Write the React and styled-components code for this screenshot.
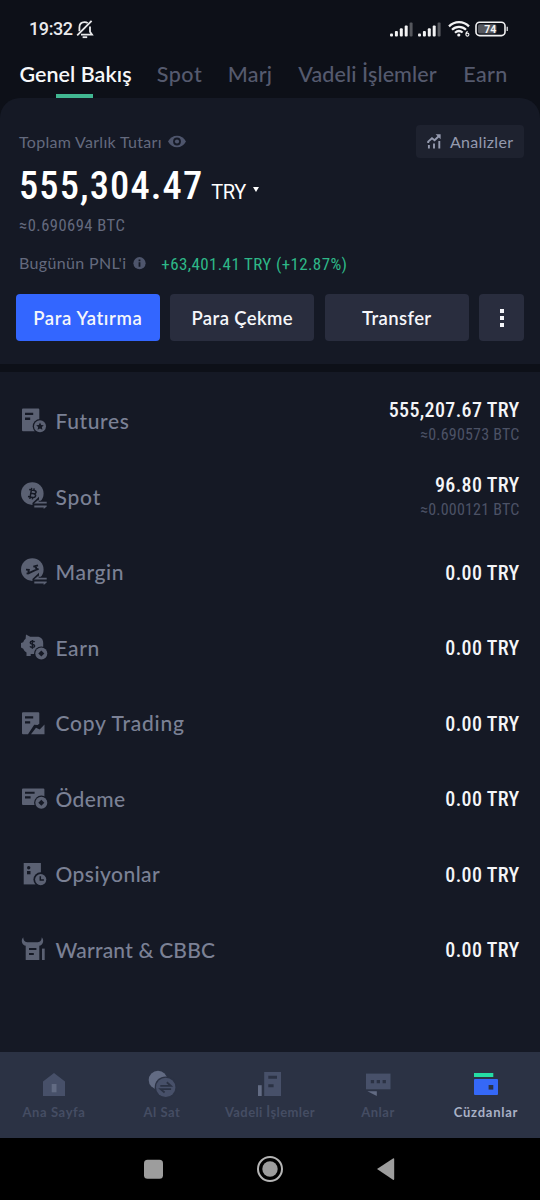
import React from "react";
import styled, { createGlobalStyle } from "styled-components";

const GlobalStyle = createGlobalStyle`
  * {
    box-sizing: border-box;
  }

  body {
    margin: 0;
    background: #0d1018;
  }
`;

const sans = `"Lato", "Open Sans", sans-serif`;
const digits = `"Roboto", "Liberation Sans", sans-serif`;

const Screen = styled.div`
  display: flex;
  flex-direction: column;
  width: 540px;
  height: 1200px;
  overflow: hidden;
  background: #0d1018;
  font-family: ${sans};
  white-space: nowrap;
`;

const StatusBar = styled.div`
  display: flex;
  align-items: center;
  height: 58px;
  padding: 0 31px 0 29px;
`;

const Clock = styled.div`
  width: 47px;
  font-family: ${digits};
  font-weight: 500;
  font-size: 18px;
  line-height: 20px;
  letter-spacing: -0.4px;
  color: #e9eaec;
`;

const StatusIcons = styled.div`
  display: flex;
  align-items: center;
  margin-left: auto;
`;

const Tabs = styled.div`
  display: flex;
  height: 40px;
  padding-left: 20px;
  gap: 25px;
`;

const Tab = styled.div`
  display: flex;
  flex-direction: column;
  align-items: center;
  justify-content: space-between;
  width: ${(props) => props.$width}px;
  padding-top: 3px;
  font-weight: ${(props) => (props.$active ? 600 : 500)};
  font-size: 21.5px;
  line-height: 26px;
  letter-spacing: ${(props) => props.$ls || 0}px;
  color: ${(props) => (props.$active ? "#f7f8fa" : "#555a6e")};
`;

const Underline = styled.div`
  width: 37px;
  height: 4px;
  margin-right: 2px;
  background: #41b792;
`;

const Summary = styled.div`
  display: flex;
  flex-direction: column;
  height: 266px;
  padding: 27px 16px 0;
  border-radius: 20px 20px 0 0;
  background: #151925;
`;

const SummaryTop = styled.div`
  display: flex;
  align-items: center;
  justify-content: space-between;
  height: 33px;
`;

const Caption = styled.div`
  display: flex;
  align-items: center;
  gap: ${(props) => props.$gap || 6}px;
  padding-left: 3px;
  font-size: 16px;
  line-height: 20px;
  letter-spacing: ${(props) => props.$ls || 0}px;
  color: #646a7e;
`;

const Analysis = styled.div`
  display: flex;
  align-items: center;
  width: 108px;
  height: 33px;
  padding-left: 11px;
  gap: 8px;
  border-radius: 4px;
  background: #1e222f;
  font-size: 16px;
  letter-spacing: 0.3px;
  color: #949aae;
`;

const Balance = styled.div`
  display: flex;
  align-items: baseline;
  height: 54px;
  padding-left: 3px;
  font-family: ${digits};
  font-weight: 500;
  font-stretch: 75%;
  font-size: 38.5px;
  line-height: 56px;
  letter-spacing: 1.1px;
  color: #ffffff;
`;

const Currency = styled.div`
  margin-left: 8px;
  font-weight: 400;
  font-stretch: 100%;
  font-size: 20px;
  letter-spacing: -0.4px;
`;

const Caret = styled.div`
  align-self: center;
  margin: 9px 0 0 7px;
  border: 3.5px solid transparent;
  border-top: 5px solid #ffffff;
  border-bottom: 0;
`;

const Approx = styled.div`
  height: 24px;
  padding-left: 3px;
  font-family: ${digits};
  font-stretch: 75%;
  font-size: 16.5px;
  line-height: 28px;
  letter-spacing: 0.5px;
  color: #646a7e;
`;

const PnlRow = styled.div`
  display: flex;
  align-items: center;
  height: 20px;
  margin-top: 17px;
`;

const Profit = styled.div`
  margin-left: 15px;
  font-family: ${digits};
  font-stretch: 75%;
  font-size: 17px;
  line-height: 20px;
  letter-spacing: 0.38px;
  padding-top: 2px;
  color: #2eb888;
`;

const Actions = styled.div`
  display: grid;
  grid-template-columns: repeat(3, 143.6px) 1fr;
  gap: 10.9px;
  margin-top: 21px;
`;

const ActionButton = styled.div`
  display: flex;
  align-items: center;
  justify-content: center;
  height: 47px;
  padding-top: 1px;
  border-radius: 4px;
  background: ${(props) => (props.$primary ? "#3366ff" : "#292d3e")};
  font-weight: 600;
  font-size: 18.5px;
  letter-spacing: ${(props) => props.$ls || 0}px;
  color: #f5f6fa;
`;

const Accounts = styled.div`
  flex: 1;
  margin-top: 8px;
  padding: 12px 20.5px 0 20px;
  background: #151925;
`;

const AccountRow = styled.div`
  display: flex;
  align-items: center;
  height: 75.5px;
`;

const AccountName = styled.div`
  margin-left: 7.5px;
  padding-bottom: 1px;
  font-weight: 500;
  font-size: 21px;
  line-height: 26px;
  letter-spacing: ${(props) => props.$ls || 0}px;
  color: #7b8195;
`;

const Amounts = styled.div`
  margin-left: auto;
  text-align: right;
  font-family: ${digits};
  font-stretch: 75%;
`;

const Amount = styled.div`
  font-weight: 500;
  font-size: 20px;
  line-height: 26px;
  letter-spacing: 0.35px;
  color: #f4f5f8;
`;

const SubAmount = styled.div`
  font-size: 16px;
  line-height: 24px;
  letter-spacing: 0.2px;
  color: #4c5265;
`;

const BottomNav = styled.div`
  display: grid;
  grid-template-columns: repeat(5, 1fr);
  height: 86px;
  background: #2b3244;
`;

const NavItem = styled.div`
  display: flex;
  flex-direction: column;
  align-items: center;
  padding-top: 18px;
  font-weight: 700;
  font-size: 13px;
  line-height: 18px;
  letter-spacing: ${(props) => props.$ls || 0}px;
  color: ${(props) => (props.$active ? "#a9b1c6" : "#454d63")};
`;

const NavLabel = styled.div`
  margin-top: 5px;
`;

const SystemBar = styled.div`
  display: flex;
  justify-content: center;
  height: 62px;
  background: #000000;
`;

const Icon = styled.svg`
  display: block;
  flex: none;
  overflow: visible;
`;

const BG = "#151925";
const FG = "#5b6173";

const BellOff = () => (
  <Icon width="18" height="20" viewBox="0 0 18 20" fill="none" stroke="#e9eaec" strokeWidth="1.8">
    <path d="M3.4 12.2V8.6c0-3.2 2-5.4 5.2-5.4 1.2 0 2.3.3 3.1.9M14 7.4v5.3l2 2.9H5" />
    <path d="M1.2 16.4L15.6 1.8" />
    <path d="M6.6 18.2h4.6" />
  </Icon>
);

const Signal = () => (
  <Icon width="23" height="15" viewBox="0 0 23 15" fill="#f2f2f3">
    <rect x="0" y="11.5" width="3" height="3" rx="1" />
    <rect x="4.9" y="9" width="3" height="5.5" rx="1" />
    <rect x="9.8" y="6.3" width="3" height="8.2" rx="1" />
    <rect x="14.7" y="3.4" width="3" height="11.1" rx="1" />
    <rect x="19.6" y="0.5" width="3" height="14" rx="1" fill="#55575d" />
  </Icon>
);

const Wifi = () => (
  <Icon width="22" height="16" viewBox="0 0 22 16" fill="none" stroke="#f2f2f3" strokeWidth="2.2">
    <path d="M1 5.4C6.6-.2 15.4-.2 21 5.4" />
    <path d="M4 8.7c4-3.9 10-3.9 14 0" />
    <path d="M7 11.8c2.4-2.2 5.2-2.3 7.6-.3" />
    <circle cx="10.8" cy="14" r="1.6" fill="#f2f2f3" stroke="none" />
    <path d="M19.6 10.3c-1.5.8-1.8 2-1.8 3M19.4 15.1a1.5 1.5 0 1 0 0-3 1.5 1.5 0 0 0 0 3z" strokeWidth="1.1" />
  </Icon>
);

const Battery = () => (
  <Icon width="34" height="16" viewBox="0 0 34 16">
    <rect x="1" y="1.2" width="29" height="13.4" rx="3.6" fill="none" stroke="#f2f2f3" strokeWidth="1.6" />
    <rect x="3" y="3.2" width="18.5" height="9.4" rx="1.8" fill="#55575d" />
    <path d="M31.6 5.7h1.2v4.4h-1.2z" fill="#f2f2f3" />
    <text
      x="15.3"
      y="11.8"
      textAnchor="middle"
      fontFamily="Roboto"
      fontWeight="700"
      fontSize="10.5"
      fill="#f2f2f3"
    >
      74
    </text>
  </Icon>
);

const Eye = () => (
  <Icon width="18" height="13" viewBox="0 0 18 13">
    <path d="M0 6.5C2 2.6 5.3.7 9 .7s7 1.9 9 5.8c-2 3.9-5.3 5.8-9 5.8S2 10.4 0 6.5z" fill="#4e556c" />
    <circle cx="9" cy="6.5" r="3.9" fill={BG} />
    <circle cx="9" cy="6.5" r="2.1" fill="#4e556c" />
  </Icon>
);

const Info = () => (
  <Icon width="13" height="13" viewBox="0 0 13 13">
    <circle cx="6.5" cy="6.2" r="6.1" fill="#4e556c" />
    <path d="M5.6 2.5h1.8v1.7H5.6zM5.6 5.2h1.8v4.5H5.6z" fill={BG} />
  </Icon>
);

const ChartIcon = () => (
  <Icon width="15" height="17" viewBox="0 0 15 17" fill="none" stroke="#949aae" strokeWidth="1.9">
    <path d="M1.2 10V8.600L5 5.200l2.600 2L12 3" />
    <path d="M8.600 1.200h5v5z" fill="#949aae" stroke="none" />
    <path d="M1.900 12v3.600M7 10.600v5M12.300 8v7.600" />
  </Icon>
);

const SwapArrows = () => (
  <>
    <path d="M12.400 20l6.600-6.200v4h8.800v8.800h-15z" fill={BG} />
    <path d="M14 20.600l4.700-4v2.100h8v1.900zM14.300 22.500h12.400v1.100l-3 2.500v-1.700h-9.400z" fill={FG} />
  </>
);

const CoinBadge = ({ cx, cy }) => (
  <>
    <circle cx={cx} cy={cy} r="7.2" fill={BG} />
    <circle cx={cx} cy={cy} r="6" fill={FG} />
    <path d={`M${cx} ${cy - 3}l3 3-3 3-3-3z`} fill={BG} />
  </>
);

const accountIcons = {
  futures: (
    <>
      <path d="M3 .6h15.3a1 1 0 0 1 1 1v21.7H3a1 1 0 0 1-1-1V1.600a1 1 0 0 1 1-1z" fill={FG} />
      <path d="M5 4.700h8.200v2.300H5zM5 9.600h5.200v2.300H5z" fill={BG} />
      <circle cx="20" cy="18.300" r="7.300" fill={BG} />
      <circle cx="20" cy="18.300" r="6" fill={FG} />
      <path
        d="M20 14.600l1.200 2.300 2.600.4-1.900 1.800.5 2.600-2.400-1.200-2.400 1.200.5-2.600-1.900-1.800 2.600-.4z"
        fill={BG}
      />
    </>
  ),
  spot: (
    <>
      <circle cx="12.300" cy="10.600" r="11.300" fill={FG} />
      <path
        d="M9.200 6.600l5.200.9c2.600.6 2 3.400-.5 3.200l-3.200-.5m3.200.5c2.700.8 2 4.100-1 3.700l-4.900-.9M11.400 6.900l-1.200 6.700M11.700 4.800l-.4 2.100M14.200 5.300l-.4 2.100M10.200 13.800l-.4 2.100M12.700 14.200l-.4 2.100"
        fill="none"
        stroke={BG}
        strokeWidth="1.500"
      />
      <SwapArrows />
    </>
  ),
  margin: (
    <>
      <circle cx="12.300" cy="10.600" r="11.300" fill={FG} />
      <path
        d="M6 10.600l3.800.3M8.200 11l.7 3.200 7.600-3.700-.8-3.300M13.300 7.700l4.700-1.300M6.600 14.600l2.300-.5M16.500 10.500l2.100-.7"
        fill="none"
        stroke={BG}
        strokeWidth="1.900"
      />
      <SwapArrows />
    </>
  ),
  earn: (
    <>
      <path
        d="M6 .600l4.200 2.200h7c3.700 0 6 2.400 6 6.200v5.400c0 3-2 4.600-3.600 5.200L17 20h-6.300v2H6.500v-3.400c-1.500-.8-2.500-2-3.200-3.800L1 13.600V9l2.200-.7c.4-1.500 1.200-2.700 2.400-3.600z"
        fill={FG}
      />
      <path
        d="M14.600 8.200c-.7-1.200-4.300-1.400-4.400.5-.1 2 4.600 1.100 4.500 3.300-.1 1.800-3.800 1.800-4.700.3M12.400 5.900v8.800"
        fill="none"
        stroke={BG}
        strokeWidth="1.400"
      />
      <CoinBadge cx={21.3} cy={19.6} />
    </>
  ),
  copy: (
    <>
      <path d="M3 2.200h15.300a1 1 0 0 1 1 1v10.600l-1.700 1.100-3.400-.2L8 24.300H3a1 1 0 0 1-1-1V3.200a1 1 0 0 1 1-1z" fill={FG} />
      <path d="M9.400 24.400l6.200-8.500 3.900 1.800v6.700z" fill={BG} />
      <path d="M5 6.300h8.200v2.200H5zM5 11.200h5.200v2.200H5z" fill={BG} />
      <path d="M11 24.300l5-6.500 3.700 1.700 4.800-4.900v9.700z" fill={FG} />
    </>
  ),
  payment: (
    <>
      <path d="M3 3.400h20.400a1 1 0 0 1 1 1V20H3a1 1 0 0 1-1-1V4.400a1 1 0 0 1 1-1z" fill={FG} />
      <path d="M5 6.700h9.600v2.100H5zM5 11.300h5.600v2.100H5z" fill={BG} />
      <CoinBadge cx={21.3} cy={17.8} />
    </>
  ),
  options: (
    <>
      <path d="M3.700 2h17.200v21.400H3.700z" fill={FG} />
      <circle cx="8.700" cy="6.700" r="1.700" fill={BG} />
      <path d="M7 10h3.500v3.300H7z" fill={BG} />
      <circle cx="20.700" cy="18.600" r="7.300" fill={BG} />
      <circle cx="20.700" cy="18.600" r="5.600" fill={FG} />
      <path d="M20.300 15.200v3.900h3.600" fill="none" stroke={BG} strokeWidth="1.500" />
    </>
  ),
  warrant: (
    <>
      <path
        d="M3.200 1.300c.2 3 1.300 4.900 4 5h10.600c2.700-.1 3.800-2 4-5 1.900 2.200 1.900 5.600-.3 7.400-.7.600-1.400.8-2.200 1V24H5.700V9.700c-.8-.2-1.500-.4-2.200-1C1.300 6.900 1.300 3.500 3.200 1.300z"
        fill={FG}
      />
      <path d="M9 11.900h7.400v2H9zM9 16.900h4.800v2H9z" fill={BG} />
      <path d="M22 12.600h2.700V24H22z" fill={FG} />
    </>
  ),
};

const NAV = "#2b3244";
const NAV_DARK = "#475069";
const NAV_LIGHT = "#626b83";

const navIcons = {
  home: (
    <>
      <path d="M14 3l11 8.400V26H3V11.400z" fill={NAV_DARK} />
      <path d="M11.700 14h4.800v8.300h-4.800z" fill={NAV_LIGHT} />
    </>
  ),
  trade: (
    <>
      <circle cx="10" cy="10" r="9.300" fill={NAV_LIGHT} />
      <circle cx="17.700" cy="17.400" r="11" fill={NAV} />
      <circle cx="17.700" cy="17.400" r="9.700" fill={NAV_DARK} />
      <path
        d="M12.300 15.800h10.500l-4-3.500M23.100 19.100H12.600l4 3.400"
        fill="none"
        stroke={NAV}
        strokeWidth="1.800"
      />
    </>
  ),
  futures: (
    <>
      <path d="M2 15.200h3.700V26H2z" fill={NAV_LIGHT} />
      <path d="M8.200 2H25v24H8.200z" fill={NAV_DARK} />
      <path d="M12.300 5.700h8.700v3h-8.700zM12.300 14.300h5.300v3h-5.300z" fill={NAV} />
    </>
  ),
  moments: (
    <>
      <path d="M2 3.600h24.500v15.700H2z" fill={NAV_DARK} />
      <path d="M6.800 10h3.300v3.200H6.800zM12.700 10H16v3.200h-3.300zM18.600 10h3.300v3.200h-3.300z" fill={NAV} />
      <path d="M3.400 21.300h9.400V26z" fill={NAV_LIGHT} />
    </>
  ),
  wallet: (
    <>
      <path d="M2 3h19.300v4H2z" fill="#25dda4" />
      <path d="M3 9h22a1 1 0 0 1 1 1v14a1 1 0 0 1-1 1H3a1 1 0 0 1-1-1V10a1 1 0 0 1 1-1z" fill="#3568f7" />
      <path d="M16.600 15h4.700v4.600h-4.700z" fill={NAV} />
    </>
  ),
};

const tabs = [
  { label: "Genel Bakış", width: 111, ls: 0.05, active: true },
  { label: "Spot", width: 47, ls: 0.5 },
  { label: "Marj", width: 44, ls: 0.2 },
  { label: "Vadeli İşlemler", width: 141, ls: 0.1 },
  { label: "Earn", width: 45, ls: 0.4 },
];

const accounts = [
  { icon: "futures", name: "Futures", amount: "555,207.67 TRY", sub: "≈0.690573 BTC", ls: 0.6 },
  { icon: "spot", name: "Spot", amount: "96.80 TRY", sub: "≈0.000121 BTC", ls: 0.8 },
  { icon: "margin", name: "Margin", amount: "0.00 TRY", ls: 0.6 },
  { icon: "earn", name: "Earn", amount: "0.00 TRY", ls: 0.6 },
  { icon: "copy", name: "Copy Trading", amount: "0.00 TRY", ls: 0.75 },
  { icon: "payment", name: "Ödeme", amount: "0.00 TRY", ls: 0.4 },
  { icon: "options", name: "Opsiyonlar", amount: "0.00 TRY", ls: 0.45 },
  { icon: "warrant", name: "Warrant & CBBC", amount: "0.00 TRY", ls: 0.2 },
];

const navItems = [
  { icon: "home", label: "Ana Sayfa", ls: 0.6 },
  { icon: "trade", label: "Al Sat", ls: 0.5 },
  { icon: "futures", label: "Vadeli İşlemler", ls: 0.4 },
  { icon: "moments", label: "Anlar", ls: 0.5 },
  { icon: "wallet", label: "Cüzdanlar", ls: 0.75, active: true },
];

const SignalGroup = styled.div`
  display: flex;
  gap: 5px;
  margin-right: 7px;
`;

const BatterySlot = styled.div`
  margin-left: 5px;
`;

const App = () => {
  return (
    <Screen>
      <GlobalStyle />
      <StatusBar>
        <Clock>19:32</Clock>
        <BellOff />
        <StatusIcons>
          <SignalGroup>
            <Signal />
            <Signal />
          </SignalGroup>
          <Wifi />
          <BatterySlot>
            <Battery />
          </BatterySlot>
        </StatusIcons>
      </StatusBar>
      <Tabs>
        {tabs.map((tab) => (
          <Tab key={tab.label} $width={tab.width} $ls={tab.ls} $active={tab.active}>
            {tab.label}
            {tab.active && <Underline />}
          </Tab>
        ))}
      </Tabs>
      <Summary>
        <SummaryTop>
          <Caption $ls={0.3}>
            Toplam Varlık Tutarı
            <Eye />
          </Caption>
          <Analysis>
            <ChartIcon />
            Analizler
          </Analysis>
        </SummaryTop>
        <Balance>
          555,304.47
          <Currency>TRY</Currency>
          <Caret />
        </Balance>
        <Approx>≈0.690694 BTC</Approx>
        <PnlRow>
          <Caption $ls={0.35} $gap={7}>
            Bugünün PNL'i
            <Info />
          </Caption>
          <Profit>+63,401.41 TRY (+12.87%)</Profit>
        </PnlRow>
        <Actions>
          <ActionButton $primary $ls={0.6}>
            Para Yatırma
          </ActionButton>
          <ActionButton $ls={0.4}>Para Çekme</ActionButton>
          <ActionButton $ls={0.4}>Transfer</ActionButton>
          <ActionButton>
            <Icon width="4" height="18" viewBox="0 0 4 18" fill="#f5f6fa">
              <path d="M0 0h4v4H0zM0 7h4v4H0zM0 14h4v4H0z" />
            </Icon>
          </ActionButton>
        </Actions>
      </Summary>
      <Accounts>
        {accounts.map((account) => (
          <AccountRow key={account.name}>
            <Icon width="28" height="28" viewBox="0 0 28 28">
              {accountIcons[account.icon]}
            </Icon>
            <AccountName $ls={account.ls}>{account.name}</AccountName>
            <Amounts>
              <Amount>{account.amount}</Amount>
              {account.sub && <SubAmount>{account.sub}</SubAmount>}
            </Amounts>
          </AccountRow>
        ))}
      </Accounts>
      <BottomNav>
        {navItems.map((item) => (
          <NavItem key={item.label} $ls={item.ls} $active={item.active}>
            <Icon width="28" height="28" viewBox="0 0 28 28">
              {navIcons[item.icon]}
            </Icon>
            <NavLabel>{item.label}</NavLabel>
          </NavItem>
        ))}
      </BottomNav>
      <SystemBar>
        <Icon width="252" height="62" viewBox="0 0 252 62" fill="#9d9d9d">
          <rect x="0" y="21.700" width="19" height="19" rx="3.500" />
          <circle cx="126" cy="31" r="12" fill="none" stroke="#b5b5b5" strokeWidth="2" />
          <circle cx="126" cy="31" r="7.700" />
          <path d="M233 31l16-10.500q1.200-.6 1.200.6v20q0 1.200-1.200.6z" />
        </Icon>
      </SystemBar>
    </Screen>
  );
};

export default App;
